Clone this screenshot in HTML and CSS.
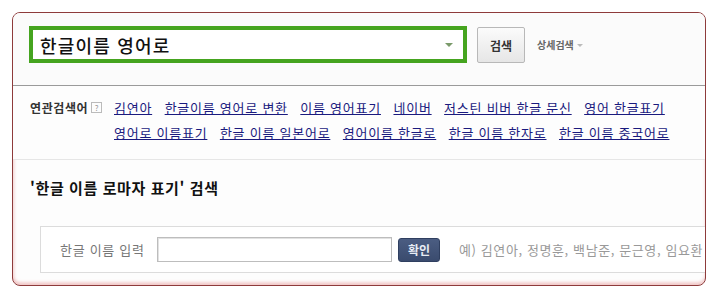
FILE: index.html
```html
<!DOCTYPE html>
<html lang="ko">
<head>
<meta charset="utf-8">
<link rel="stylesheet" href="styles.css">
</head>
<body>
<div class="card">
  <div class="search-area">
    <div class="search-box">
      <span class="query">한글이름 영어로</span>
      <span class="caret"></span>
    </div>
    <button class="search-btn">검색</button>
    <span class="detail">상세검색<span class="mini-caret"></span></span>
  </div>
  <div class="related">
    <div class="related-label">연관검색어 <span class="help">?</span></div>
    <div class="links">
      <a href="#">김연아</a>
      <a href="#">한글이름 영어로 변환</a>
      <a href="#">이름 영어표기</a>
      <a href="#">네이버</a>
      <a href="#">저스틴 비버 한글 문신</a>
      <a href="#">영어 한글표기</a>
      <a href="#">영어로 이름표기</a>
      <a href="#">한글 이름 일본어로</a>
      <a href="#">영어이름 한글로</a>
      <a href="#">한글 이름 한자로</a>
      <a href="#">한글 이름 중국어로</a>
    </div>
  </div>
  <div class="tool">
    <h2 class="tool-title">'한글 이름 로마자 표기' 검색</h2>
    <div class="tool-box">
      <span class="tool-label">한글 이름 입력</span>
      <span class="tool-input"></span>
      <button class="ok-btn">확인</button>
      <span class="example">예) 김연아, 정명훈, 백남준, 문근영, 임요환</span>
    </div>
  </div>
</div>
</body>
</html>
```
FILE: styles.css
```css
html, body {
  margin: 0;
  padding: 0;
  background: #ffffff;
}
body {
  font-family: "Noto Sans CJK KR", "Noto Sans", sans-serif;
  color: #222;
}
.card {
  margin: 12px 0 0 12px;
  width: 694px;
  height: 274px;
  box-sizing: border-box;
  border: 1px solid #8e3b3b;
  border-radius: 8px;
  overflow: hidden;
  background: #fdfdfd;
  box-shadow: inset 0 -3px 3px rgba(235, 170, 170, 0.55), inset 2px 0 3px rgba(240, 200, 200, 0.4);
}
.search-area {
  height: 73px;
  box-sizing: border-box;
  padding: 13px 0 0 16px;
  border-bottom: 1px solid #9a9a9a;
  display: flex;
  align-items: flex-start;
  background: #fbfbfb;
}
.search-box {
  width: 438px;
  height: 37px;
  box-sizing: border-box;
  border: 4px solid #45a41f;
  background: #fff;
  display: flex;
  align-items: center;
  justify-content: space-between;
  padding: 0 10px 0 7px;
}
.query {
  font-size: 18px;
  line-height: 22px;
  color: #111;
  font-weight: 500;
  letter-spacing: 1.2px;
}
.caret {
  width: 0;
  height: 0;
  border-left: 4px solid transparent;
  border-right: 4px solid transparent;
  border-top: 4px solid #7a9a6a;
  margin-top: 1px;
}
.search-btn {
  margin: 1px 0 0 10px;
  width: 48px;
  height: 36px;
  box-sizing: border-box;
  border: 1px solid #b8b8b8;
  border-radius: 2px;
  background: linear-gradient(#fbfbfb, #e6e6e6);
  font-family: inherit;
  font-size: 12px;
  font-weight: 700;
  color: #333;
  padding: 0;
}
.detail {
  margin: 12px 0 0 12px;
  font-size: 10px;
  font-weight: 700;
  color: #666;
  line-height: 14px;
  display: flex;
  align-items: center;
}
.mini-caret {
  margin-left: 3px;
  width: 0;
  height: 0;
  border-left: 3px solid transparent;
  border-right: 3px solid transparent;
  border-top: 3px solid #bbb;
}
.related {
  height: 74px;
  box-sizing: border-box;
  padding: 9px 0 0 17px;
  border-bottom: 1px solid #e6e6e6;
  display: flex;
  align-items: flex-start;
  background: #fdfdfd;
}
.related-label {
  font-size: 12px;
  font-weight: 700;
  color: #333;
  line-height: 25px;
  width: 84px;
  flex: none;
  display: flex;
  align-items: center;
  white-space: nowrap;
  letter-spacing: 0.6px;
}
.help {
  display: inline-block;
  width: 9px;
  height: 9px;
  border: 1px solid #bbb;
  font-size: 8px;
  line-height: 9px;
  text-align: center;
  color: #999;
  font-weight: 400;
  margin-left: 3px;
  letter-spacing: 0;
}
.links {
  width: 575px;
  display: flex;
  flex-wrap: wrap;
  column-gap: 12.5px;
  font-size: 13px;
  line-height: 25px;
  letter-spacing: 0.75px;
}
.links a {
  color: #1a1a7e;
  text-decoration: underline;
  white-space: nowrap;
}
.tool {
  padding: 18px 0 0 17px;
}
.tool-title {
  margin: 0;
  font-size: 15px;
  font-weight: 700;
  line-height: 20px;
  color: #111;
  letter-spacing: 0.6px;
}
.tool-box {
  margin: 28px -20px 0 10px;
  height: 47px;
  box-sizing: border-box;
  border: 1px solid #dcdcdc;
  background: #fff;
  display: flex;
  align-items: center;
  padding: 0 0 0 19px;
}
.tool-label {
  width: 97px;
  flex: none;
  font-size: 13px;
  color: #777;
  letter-spacing: 0.7px;
}
.tool-input {
  width: 235px;
  height: 25px;
  box-sizing: border-box;
  border: 1px solid #bdbdbd;
  box-shadow: inset 1px 1px 0 #e2e2e2;
  background: #fff;
  flex: none;
}
.ok-btn {
  margin-left: 6px;
  width: 42px;
  height: 24px;
  border: 1px solid #2f3f60;
  border-radius: 3px;
  background: linear-gradient(#4b5d82, #3a4b6e);
  color: #e8ecf4;
  font-family: inherit;
  font-size: 12px;
  font-weight: 700;
  padding: 0;
  flex: none;
}
.example {
  margin-left: 19px;
  font-size: 13px;
  color: #999;
  white-space: nowrap;
  letter-spacing: 0.6px;
}
```
